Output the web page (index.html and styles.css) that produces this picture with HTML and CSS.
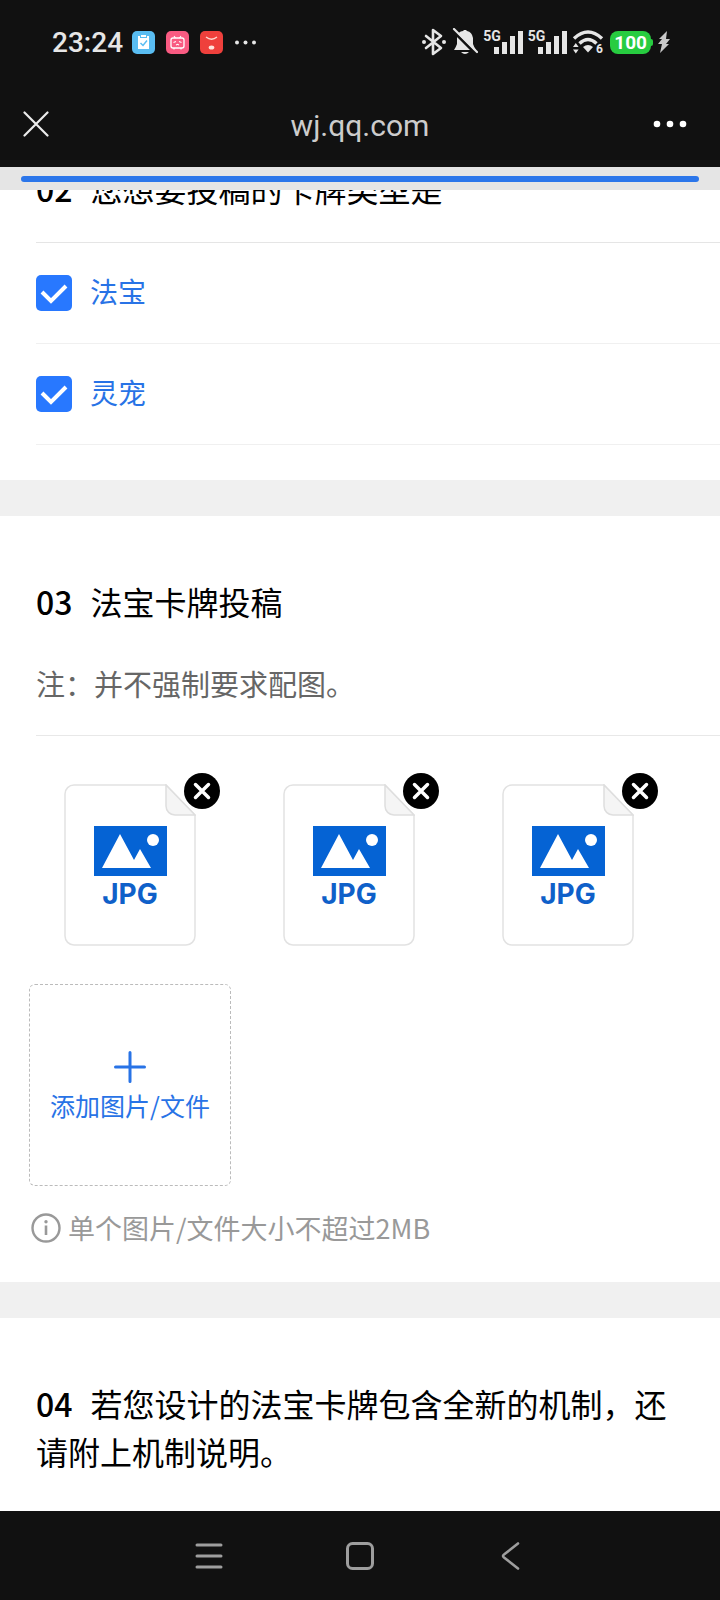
FILE: index.html
```html
<!DOCTYPE html>
<html lang="zh-CN">
<head>
    <meta charset="UTF-8">
    <meta name="viewport" content="width=device-width, initial-scale=1.0">
    <title>wj.qq.com</title>
    <link rel="stylesheet" href="styles.css">
</head>
<body>
    <!-- shared icons -->
    <svg class="defs" width="0" height="0" aria-hidden="true">
        <symbol id="signal" viewBox="0 0 30 24">
            <path fill="#e6e6e6" d="M1 17h5v7H1zM9 12h5v12H9zM17 6h5v18h-5zM25 1h5v23h-5z"/>
        </symbol>
        <symbol id="jpg-file" viewBox="0 0 132 162">
            <path d="M10 1H102L131 31V152a9 9 0 0 1-9 9H10a9 9 0 0 1-9-9V10a9 9 0 0 1 9-9z" fill="#fff" stroke="#e2e2e2" stroke-width="1.5"/>
            <path d="M102 1V22a9 9 0 0 0 9 9H131z" fill="#f5f5f5" stroke="#dedede" stroke-width="1.5"/>
            <path d="M30 42h73v50H30z" fill="#0563d4"/>
            <path d="M38 84L56 50L70 76L76 65L87 84z" fill="#fff"/>
            <circle cx="89" cy="56" r="6" fill="#fff"/>
        </symbol>
        <symbol id="remove" viewBox="0 0 36 36">
            <circle cx="18" cy="18" r="18"/>
            <path d="M11.500 11.500l13 13m0-13l-13 13" fill="none" stroke="#fff" stroke-width="3.500" stroke-linecap="round"/>
        </symbol>
    </svg>

    <header class="top">
        <div class="status-bar">
            <span class="time">23:24</span>
            <div class="apps">
                <svg width="23" height="23" viewBox="0 0 23 23">
                    <rect width="23" height="23" rx="5" fill="#59bdf2"/>
                    <path d="M6 5h2v2h7V5h2v13H6z" fill="#fff"/>
                    <path d="M9 4h5v2H9z" fill="#fff"/>
                    <path d="M8.500 12l2.500 2.500 4-5" fill="none" stroke="#59bdf2" stroke-width="1.500"/>
                </svg>
                <svg width="23" height="23" viewBox="0 0 23 23">
                    <rect width="23" height="23" rx="5" fill="#f95b82"/>
                    <rect x="5" y="7" width="13" height="10" rx="2" fill="none" stroke="#fff" stroke-width="1.300"/>
                    <path d="M8 5l1.500 2M15 5l-1.500 2M7.500 11.500l2.500-1M15.500 11.500l-2.500-1M10 14l1.500-.7 1.500.7M8 17v1.500M15 17v1.500" fill="none" stroke="#fff" stroke-width="1.100"/>
                </svg>
                <svg width="23" height="23" viewBox="0 0 23 23">
                    <rect width="23" height="23" rx="5" fill="#ef403c"/>
                    <path d="M6 6q5.500 4.500 11 0" fill="none" stroke="#ffd9d0" stroke-width="1.300"/>
                    <ellipse cx="11.500" cy="16.500" rx="2.800" ry="2" fill="#ffe4dc"/>
                </svg>
                <svg width="23" height="23" viewBox="0 0 23 23" fill="#e6e6e6">
                    <circle cx="3" cy="11.500" r="2"/><circle cx="11.500" cy="11.500" r="2"/><circle cx="20" cy="11.500" r="2"/>
                </svg>
            </div>
            <div class="indicators">
                <svg width="26" height="28" viewBox="0 0 26 28">
                    <path d="M5 8l15 12-8 6V2l8 6L5 20" fill="none" stroke="#e6e6e6" stroke-width="2.600" stroke-linejoin="round" stroke-linecap="round"/>
                    <circle cx="3" cy="14" r="2" fill="#e6e6e6"/><circle cx="23" cy="14" r="2" fill="#e6e6e6"/>
                </svg>
                <svg width="26" height="28" viewBox="0 0 26 28">
                    <path d="M2 22q2-3 3-6V10q1-7 6-7l1-1h2l1 1q5 1 6 7v6q1 3 3 6zM9 24h8q-4 4-8 0z" fill="#e6e6e6"/>
                    <path d="M0 2L24 26" stroke="#111" stroke-width="3"/>
                    <path d="M2 1L25 24" stroke="#e6e6e6" stroke-width="2.200" stroke-linecap="round"/>
                </svg>
                <div class="cell"><span class="net">5G</span><svg width="30" height="24"><use href="#signal"/></svg></div>
                <div class="cell"><span class="net">5G</span><svg width="30" height="24"><use href="#signal"/></svg></div>
                <svg class="wifi" width="33" height="28" viewBox="0 0 33 28">
                    <path d="M2 10.500q14-13 28 0M7.500 15.500q8.500-8 17 0" fill="none" stroke="#e6e6e6" stroke-width="3.400"/>
                    <path d="M11 19q5-4 10 0l-5 5.500z" fill="#e6e6e6"/>
                    <path d="M1 19l2.800-4 2.800 4zM1 21.500h5.600L3.800 25.500z" fill="#e6e6e6"/>
                    <text class="wifi-gen" x="24" y="25">6</text>
                </svg>
                <span class="battery">100</span>
                <svg class="bolt" width="12" height="22" viewBox="0 0 12 22">
                    <path d="M9 0L1 8h3L0 13h4L2 22 11 13H8l4-5H8z" fill="#c9c9c9"/>
                </svg>
            </div>
        </div>
        <nav class="title-bar">
            <button class="icon-button close" aria-label="关闭">
                <svg width="26" height="26" viewBox="0 0 26 26"><path d="M1.500 1.500l23 23m0-23l-23 23" stroke="#ececec" stroke-width="2.200" stroke-linecap="round"/></svg>
            </button>
            <span class="site">wj.qq.com</span>
            <button class="icon-button more" aria-label="更多">
                <svg width="34" height="8" viewBox="0 0 34 8" fill="#fff"><circle cx="4" cy="4" r="3.300"/><circle cx="17" cy="4" r="3.300"/><circle cx="30" cy="4" r="3.300"/></svg>
            </button>
        </nav>
    </header>

    <main class="page">
        <div class="progress"><div class="progress-bar"></div></div>

        <section class="question scrolled">
            <h2 class="question-title"><span class="num">02</span>您想要投稿的卡牌类型是</h2>
            <div class="options">
                <label class="option"><input type="checkbox" checked><span>法宝</span></label>
                <label class="option"><input type="checkbox" checked><span>灵宠</span></label>
            </div>
        </section>

        <section class="question">
            <h2 class="question-title"><span class="num">03</span>法宝卡牌投稿</h2>
            <p class="note">注：并不强制要求配图。</p>
            <div class="upload">
                <div class="file">
                    <svg width="132" height="162"><use href="#jpg-file"/><text class="jpg-text" x="66" y="120" text-anchor="middle">JPG</text></svg>
                    <button class="remove" aria-label="删除"><svg width="36" height="36"><use href="#remove"/></svg></button>
                </div>
                <div class="file">
                    <svg width="132" height="162"><use href="#jpg-file"/><text class="jpg-text" x="66" y="120" text-anchor="middle">JPG</text></svg>
                    <button class="remove" aria-label="删除"><svg width="36" height="36"><use href="#remove"/></svg></button>
                </div>
                <div class="file">
                    <svg width="132" height="162"><use href="#jpg-file"/><text class="jpg-text" x="66" y="120" text-anchor="middle">JPG</text></svg>
                    <button class="remove" aria-label="删除"><svg width="36" height="36"><use href="#remove"/></svg></button>
                </div>
                <button class="add">
                    <svg width="32" height="32" viewBox="0 0 32 32"><path d="M16 1.500v29M1.500 16h29" stroke="#2873e6" stroke-width="3" stroke-linecap="round"/></svg>
                    添加图片/文件
                </button>
            </div>
            <p class="hint">
                <svg width="30" height="30" viewBox="0 0 30 30">
                    <circle cx="15" cy="15" r="13.500" fill="none" stroke="#999" stroke-width="2.400"/>
                    <circle cx="15" cy="8.800" r="1.700" fill="#999"/>
                    <path d="M15 12.500v9.500" stroke="#999" stroke-width="2.600"/>
                </svg>
                单个图片/文件大小不超过2MB
            </p>
        </section>

        <section class="question">
            <h2 class="question-title"><span class="num">04</span>若您设计的法宝卡牌包含全新的机制，还请附上机制说明。</h2>
        </section>
    </main>

    <footer class="system-nav">
        <button class="icon-button" aria-label="最近任务">
            <svg width="28" height="28" viewBox="0 0 28 28"><path d="M2 3h24M2 14h24M2 25h24" stroke="#9e9e9e" stroke-width="3" stroke-linecap="round"/></svg>
        </button>
        <button class="icon-button" aria-label="主屏幕">
            <svg width="28" height="28" viewBox="0 0 28 28"><rect x="1.500" y="1.500" width="25" height="25" rx="5" fill="none" stroke="#9e9e9e" stroke-width="3"/></svg>
        </button>
        <button class="icon-button" aria-label="返回">
            <svg width="28" height="28" viewBox="0 0 28 28"><path d="M21 1.500L7 12.500q-2 1.500 0 3L21 26.500" fill="none" stroke="#9e9e9e" stroke-width="2.600" stroke-linecap="round"/></svg>
        </button>
    </footer>
</body>
</html>
```

FILE: styles.css
```css
* {
    box-sizing: border-box;
}

body {
    display: flex;
    flex-direction: column;
    height: 100vh;
    margin: 0;
    overflow: hidden;
    background-color: #f0f0f0;
    color: #000;
    font-family: "Noto Sans CJK SC", sans-serif;
}

button {
    padding: 0;
    border: none;
    background: none;
    font-family: inherit;
    cursor: pointer;
}

svg {
    display: block;
    flex: none;
}

.defs {
    position: absolute;
}

/* phone status bar and browser title */
.top {
    flex: none;
    background-color: #111;
    color: #e6e6e6;
    font-family: Roboto, sans-serif;
}

.status-bar {
    display: flex;
    align-items: center;
    height: 84px;
    padding: 0 50px 0 52px;
}

.time {
    font-size: 28px;
    font-weight: 500;
}

.apps {
    display: flex;
    gap: 11px;
    margin-left: 9px;
}

.indicators {
    display: flex;
    align-items: center;
    gap: 5px;
    margin-left: auto;
}

.cell {
    display: flex;
    align-items: flex-end;
}

.net {
    align-self: flex-start;
    margin-right: -8px;
    font-size: 14px;
    font-weight: 700;
    line-height: 12px;
}

.wifi-gen {
    fill: #e6e6e6;
    font-size: 12px;
    font-weight: 700;
}

.battery {
    position: relative;
    margin-right: 2px;
    padding: 0 4px;
    border-radius: 8px;
    background-color: #27cc40;
    color: #fff;
    font-size: 19px;
    font-weight: 700;
    line-height: 23px;
}

.battery::after {
    content: "";
    position: absolute;
    top: 8px;
    right: -2px;
    width: 4px;
    height: 7px;
    border-radius: 2px;
    background-color: #27cc40;
}

.title-bar {
    display: flex;
    align-items: center;
    height: 83px;
    padding: 0 33px 3px 23px;
}

.icon-button {
    display: flex;
    align-items: center;
    justify-content: center;
}

.close {
    justify-content: flex-start;
    width: 44px;
}

.more {
    justify-content: flex-end;
    width: 34px;
}

.site {
    flex: 1;
    padding-top: 2px;
    color: #ccc;
    font-size: 30px;
    text-align: center;
}

/* survey */
.page {
    position: relative;
    display: flex;
    flex: 1;
    flex-direction: column;
    gap: 36px;
    min-height: 0;
    overflow: hidden;
}

.progress {
    position: absolute;
    top: 0;
    left: 0;
    right: 0;
    padding: 9px 21px 8px;
    background-color: #e5e5e5;
}

.progress-bar {
    height: 6px;
    border-radius: 3px;
    background-color: #2b76ea;
}

.question {
    flex: none;
    padding: 61px 0 34px;
    background-color: #fff;
}

.question:last-child {
    flex: 1;
}

.scrolled {
    margin-top: -3px;
    padding-top: 0;
}

.question-title {
    margin: 0;
    padding: 0 36px;
    font-size: 32px;
    font-weight: 400;
    line-height: 48px;
}

.num {
    margin-right: 18px;
    font-weight: 500;
}

.options {
    margin: 30px 0 1px 36px;
    border-top: 1px solid #e5e5e5;
}

.option {
    display: flex;
    align-items: center;
    gap: 18px;
    height: 101px;
    border-bottom: 1px solid #f0f0f0;
    color: #2873e6;
    font-size: 28px;
}

.option span {
    padding-bottom: 4px;
}

.option input {
    width: 36px;
    height: 36px;
    margin: 0;
    border-radius: 5px;
    background: #2878ff url("data:image/svg+xml,%3Csvg xmlns='http://www.w3.org/2000/svg' viewBox='0 0 36 36'%3E%3Cpath d='M6 17l9 9 15-15' fill='none' stroke='white' stroke-width='4'/%3E%3C/svg%3E");
    appearance: none;
}

.note {
    margin: 36px 0 0 36px;
    padding-bottom: 30px;
    border-bottom: 1px solid #e8e8e8;
    color: #666;
    font-size: 29px;
    line-height: 44px;
}

.upload {
    display: grid;
    grid-template-columns: repeat(auto-fill, 202px);
    gap: 18px 17px;
    padding: 28px 29px 0;
}

.file {
    position: relative;
    display: flex;
    align-items: center;
    justify-content: center;
    height: 202px;
}

.jpg-text {
    fill: #0f60c9;
    font-family: Inter, sans-serif;
    font-size: 28px;
    font-weight: 700;
}

.remove {
    position: absolute;
    top: 9px;
    right: 11px;
}

.add {
    display: flex;
    flex-direction: column;
    align-items: center;
    justify-content: center;
    gap: 4px;
    height: 202px;
    padding-top: 4px;
    border: 1px dashed #bbb;
    border-radius: 6px;
    color: #2873e6;
    font-size: 25px;
}

.hint {
    display: flex;
    align-items: center;
    gap: 7px;
    margin: 22px 0 0 31px;
    color: #999;
    font-size: 27px;
    line-height: 40px;
}

/* android buttons */
.system-nav {
    display: flex;
    flex: none;
    align-items: center;
    justify-content: center;
    gap: 123px;
    height: 89px;
    background-color: #111;
}
```
